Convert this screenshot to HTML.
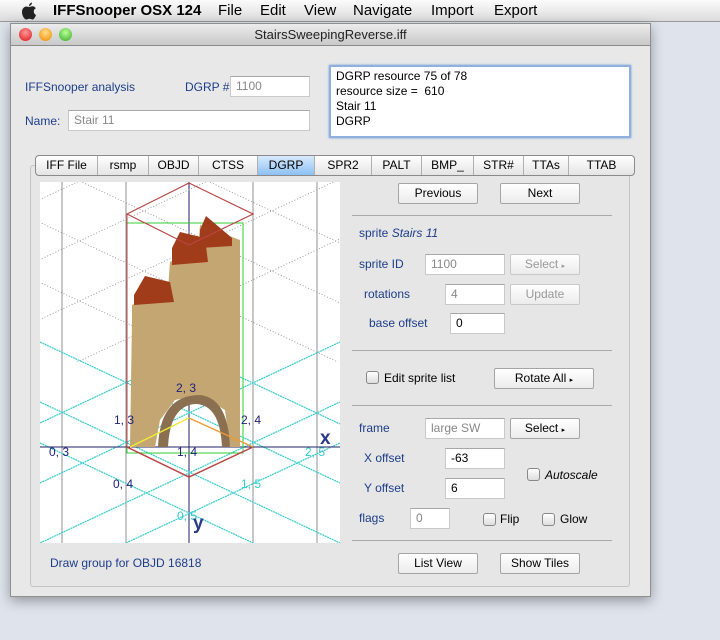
<!DOCTYPE html>
<html><head><style>
*{box-sizing:border-box;margin:0;padding:0}
body{width:720px;height:640px;background:#dfe4ec;font-family:"Liberation Sans",sans-serif;font-size:12px;position:relative;overflow:hidden;color:#000}
.a{position:absolute}
.menu{left:0;top:0;width:720px;height:22px;background:linear-gradient(#fbfbfb,#dcdcdc);border-bottom:1px solid #9a9a9a;font-size:15px}
.menu span{position:absolute;top:2px}
.win{left:10px;top:23px;width:641px;height:574px;background:#e8e8e8;border:1px solid #8f8f8f;box-shadow:0 4px 12px rgba(0,0,0,.35)}
.tb{left:0;top:0;width:639px;height:22px;background:linear-gradient(#ececec,#c9c9c9);border-bottom:1px solid #8b8b8b;text-align:center;font-size:13px;line-height:22px;color:#222}
.dot{width:13px;height:13px;border-radius:50%;top:4px}
.lbl{color:#1c3d8a;font-size:12px}
.fld{background:#fff;border:1px solid #c9c9c9;border-top-color:#a8a8a8;height:21px;padding:2px 5px;font-size:12px}
.gray{color:#888}
.btn{background:linear-gradient(#fff,#ececec);border:1px solid #a5a5a5;height:21px;text-align:center;line-height:19px;font-size:12px;border-radius:2px}
.dis{color:#999;border-color:#c8c8c8}
.sep{height:1px;background:#a9a9a9;left:352px;width:260px}
.cb{width:13px;height:13px;border:1px solid #888;border-radius:3px;background:linear-gradient(#fff,#ddd)}
.tabs{left:35px;top:155px;height:21px;width:600px;border:1px solid #8a8a8a;border-radius:4px;background:linear-gradient(#fff,#e4e4e4);display:flex;font-size:12px}
.tabs div{border-right:1px solid #b0b0b0;text-align:center;line-height:19px}
</style></head><body>
<div class="a menu">
<svg class="a" style="left:21px;top:2px" width="16" height="18" viewBox="0 0 16 18"><path d="M11 0.5 C11 2.5 9.5 4 8 4 C8 2.2 9.5 0.7 11 0.5Z M8 5 C9 5 10 4.3 11.5 4.3 C13 4.3 14.2 5.2 14.8 6.3 C13.2 7.2 12.6 8.6 12.8 10 C13 11.5 14 12.5 15 13 C14.3 15 13 17.5 11.5 17.5 C10.3 17.5 10 16.8 8.5 16.8 C7 16.8 6.5 17.5 5.3 17.5 C3.5 17.5 1 14 1 10 C1 6.5 3.3 4.5 5.3 4.5 C6.5 4.5 7.3 5 8 5Z" fill="#222"/></svg>
<span style="left:53px;font-weight:bold">IFFSnooper OSX 124</span>
<span style="left:218px">File</span><span style="left:260px">Edit</span><span style="left:304px">View</span>
<span style="left:353px">Navigate</span><span style="left:431px">Import</span><span style="left:494px">Export</span>
</div>
<div class="a win">
<div class="a tb">StairsSweepingReverse.iff</div>
<div class="a dot" style="left:8px;background:radial-gradient(circle at 50% 35%,#f99,#d11)"></div>
<div class="a dot" style="left:28px;background:radial-gradient(circle at 50% 35%,#fd8,#e80)"></div>
<div class="a dot" style="left:48px;background:radial-gradient(circle at 50% 35%,#bf9,#3a2)"></div>
</div>
<div class="a lbl" style="left:25px;top:80px">IFFSnooper analysis</div>
<div class="a lbl" style="left:185px;top:80px">DGRP #</div>
<div class="a fld gray" style="left:230px;top:76px;width:80px">1100</div>
<div class="a lbl" style="left:25px;top:114px">Name:</div>
<div class="a fld gray" style="left:68px;top:110px;width:242px">Stair 11</div>
<div class="a" style="left:329px;top:65px;width:302px;height:73px;background:#fff;border:2px solid #8fb0dc;padding:2px 5px;font-size:12px;line-height:15px;box-shadow:0 0 2px #6a9ad8">DGRP resource 75 of 78<br>resource size =&nbsp; 610<br>Stair 11<br>DGRP</div>
<div class="a" style="left:30px;top:165px;width:600px;height:422px;border:1px solid #c4c4c4;background:#e6e6e6;border-radius:3px"></div>
<div class="a tabs">
<div style="width:62px">IFF File</div><div style="width:51px">rsmp</div><div style="width:50px">OBJD</div><div style="width:59px">CTSS</div>
<div style="width:57px;background:linear-gradient(#d8eafc,#8cc0f4)">DGRP</div><div style="width:57px">SPR2</div><div style="width:50px">PALT</div><div style="width:52px">BMP_</div><div style="width:50px">STR#</div><div style="width:45px">TTAs</div><div style="width:65px;border:none">TTAB</div>
</div>
<svg class="a" style="left:40px;top:182px" width="300" height="361" viewBox="40 182 300 361">
<defs><clipPath id="c"><rect x="40" y="182" width="300" height="361"/></clipPath>
<clipPath id="up"><rect x="40" y="182" width="300" height="180"/></clipPath></defs>
<rect x="40" y="182" width="300" height="361" fill="#fff"/>
<g clip-path="url(#c)">
<g stroke="#777" stroke-width="0.8">
<line x1="62" y1="182" x2="62" y2="543"/><line x1="126" y1="182" x2="126" y2="543"/><line x1="253" y1="182" x2="253" y2="543"/><line x1="317" y1="182" x2="317" y2="543"/>
</g>
<line x1="189" y1="182" x2="189" y2="543" stroke="#22226a"/>
<g stroke="#888" stroke-width="0.8" stroke-dasharray="1,2" clip-path="url(#up)">
<line x1="-200" y1="110" x2="500" y2="438"/><line x1="-200" y1="170" x2="500" y2="498"/><line x1="-200" y1="50" x2="500" y2="378"/><line x1="-200" y1="-10" x2="500" y2="318"/>
<line x1="-200" y1="432" x2="500" y2="104"/><line x1="-200" y1="492" x2="500" y2="164"/><line x1="-200" y1="372" x2="500" y2="44"/><line x1="-200" y1="312" x2="500" y2="-16"/>
</g>
<g stroke="#3cc" stroke-width="1.2" stroke-dasharray="2,0.6" fill="none">
<polyline points="40,423 189,353 340,424"/>
<line x1="40" y1="483" x2="340" y2="342"/><line x1="40" y1="342" x2="340" y2="483"/>
<line x1="40" y1="543" x2="340" y2="402"/><line x1="40" y1="402" x2="340" y2="543"/>
<line x1="126" y1="543" x2="340" y2="443"/><line x1="40" y1="443" x2="253" y2="543"/>
</g>
<line x1="40" y1="447" x2="340" y2="447" stroke="#22226a"/>
<rect x="127" y="223" width="116" height="230" fill="none" stroke="#3c3"/>
<polygon points="132,320 132,305 168,290 170,262 198,250 200,225 240,240 240,447 230,447 225,410 200,395 175,400 160,420 155,447 130,447" fill="#c4a672"/>
<path d="M158 447 Q160 395 200 395 Q228 398 230 447 L222 447 Q220 405 196 404 Q170 405 168 447Z" fill="#8a7050"/>
<polygon points="134,295 145,276 170,282 174,302 134,305" fill="#a03c1a"/><polygon points="172,248 180,232 205,238 208,262 172,265" fill="#a03c1a"/><polygon points="200,230 206,216 232,238 232,246 200,248" fill="#a03c1a"/>
<polygon points="127,214 189,183 253,214 189,245" fill="none" stroke="#b44" stroke-width="1.2"/>
<polyline points="127,447 189,477 253,447" fill="none" stroke="#b44" stroke-width="1.5"/>
<line x1="127" y1="214" x2="127" y2="447" stroke="#b44"/>
<polyline points="130,447 189,418" fill="none" stroke="#ee3" stroke-width="1.3"/>
<polyline points="189,418 253,447" fill="none" stroke="#e93" stroke-width="1.3"/>
</g>
<g font-family="Liberation Sans,sans-serif" font-size="12" fill="#22227a">
<text x="176" y="392">2, 3</text><text x="114" y="424">1, 3</text><text x="241" y="424">2, 4</text><text x="49" y="456">0, 3</text><text x="177" y="456">1, 4</text><text x="113" y="488">0, 4</text>
<text x="305" y="456" fill="#3cc">2, 5</text><text x="241" y="488" fill="#3cc">1, 5</text><text x="177" y="520" fill="#3cc">0, 5</text>
<text x="320" y="444" font-size="19" font-weight="bold" fill="#2a3a8a">x</text><text x="193" y="529" font-size="19" font-weight="bold" fill="#2a3a8a">y</text>
</g>
</svg>
<div class="a lbl" style="left:50px;top:556px">Draw group for OBJD 16818</div>
<div class="a btn" style="left:398px;top:183px;width:80px">Previous</div>
<div class="a btn" style="left:500px;top:183px;width:80px">Next</div>
<div class="a sep" style="top:215px"></div>
<div class="a lbl" style="left:359px;top:226px">sprite <i>Stairs 11</i></div>
<div class="a lbl" style="left:359px;top:257px">sprite ID</div>
<div class="a fld gray" style="left:425px;top:254px;width:80px">1100</div>
<div class="a btn dis" style="left:510px;top:254px;width:70px">Select <span style="font-size:7px">▸</span></div>
<div class="a lbl" style="left:364px;top:287px">rotations</div>
<div class="a fld gray" style="left:445px;top:284px;width:60px">4</div>
<div class="a btn dis" style="left:510px;top:284px;width:70px">Update</div>
<div class="a lbl" style="left:369px;top:316px">base offset</div>
<div class="a fld" style="left:450px;top:313px;width:55px">0</div>
<div class="a sep" style="top:350px"></div>
<div class="a cb" style="left:366px;top:371px"></div>
<div class="a" style="left:384px;top:371px">Edit sprite list</div>
<div class="a btn" style="left:494px;top:368px;width:100px">Rotate All <span style="font-size:7px">▸</span></div>
<div class="a sep" style="top:405px"></div>
<div class="a lbl" style="left:359px;top:421px">frame</div>
<div class="a fld gray" style="left:425px;top:418px;width:80px">large SW</div>
<div class="a btn" style="left:510px;top:418px;width:70px">Select <span style="font-size:7px">▸</span></div>
<div class="a lbl" style="left:364px;top:451px">X offset</div>
<div class="a fld" style="left:445px;top:448px;width:60px">-63</div>
<div class="a cb" style="left:527px;top:468px"></div>
<div class="a" style="left:545px;top:468px"><i>Autoscale</i></div>
<div class="a lbl" style="left:364px;top:481px">Y offset</div>
<div class="a fld" style="left:445px;top:478px;width:60px">6</div>
<div class="a lbl" style="left:359px;top:511px">flags</div>
<div class="a fld gray" style="left:410px;top:508px;width:40px">0</div>
<div class="a cb" style="left:483px;top:513px"></div><div class="a" style="left:500px;top:512px">Flip</div>
<div class="a cb" style="left:542px;top:513px"></div><div class="a" style="left:560px;top:512px">Glow</div>
<div class="a sep" style="top:540px"></div>
<div class="a btn" style="left:398px;top:553px;width:80px">List View</div>
<div class="a btn" style="left:500px;top:553px;width:80px">Show Tiles</div>
</body></html>
